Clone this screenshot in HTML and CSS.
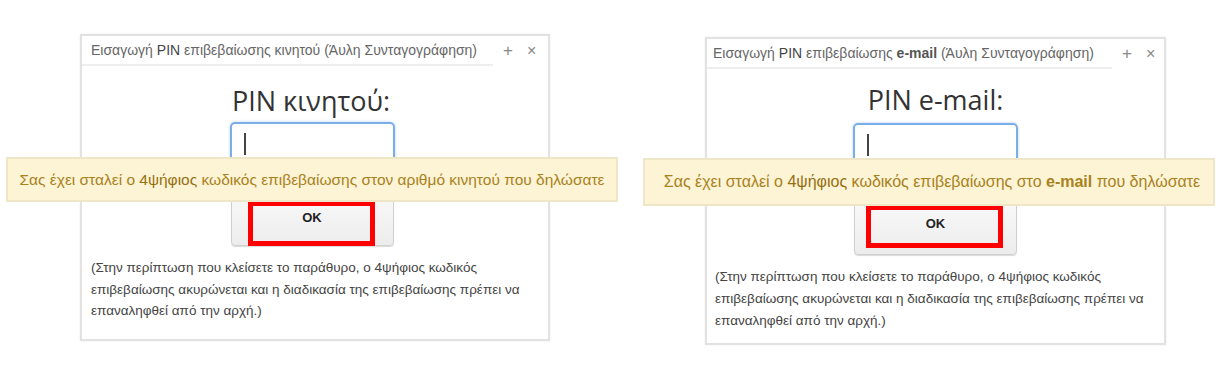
FILE: index.html
```html
<!DOCTYPE html>
<html lang="el">
<head>
    <meta charset="UTF-8">
    <meta name="viewport" content="width=device-width, initial-scale=1.0">
    <title>Εισαγωγή PIN επιβεβαίωσης</title>
    <link rel="stylesheet" href="styles.css">
</head>
<body>

    <div class="stage">

        <section class="shot shot-sms">
            <div class="dialog">
                <div class="dialog-head">
                    <span class="dialog-title">Εισαγωγή <b>PIN</b> επιβεβαίωσης κινητού (Άυλη Συνταγογράφηση)</span>
                    <span class="dialog-tools"><span>+</span><span class="close">&times;</span></span>
                </div>
                <div class="dialog-body">
                    <h2 class="pin-label">PIN κινητού:</h2>
                    <div class="pin-input"><span class="caret"></span></div>
                    <div class="ok-btn">OK<span class="mark"></span></div>
                    <p class="note">(Στην περίπτωση που κλείσετε το παράθυρο, ο 4ψήφιος κωδικός επιβεβαίωσης ακυρώνεται και η διαδικασία της επιβεβαίωσης πρέπει να επαναληφθεί από την αρχή.)</p>
                </div>
            </div>
            <div class="notice">Σας έχει σταλεί ο <b>4ψήφιος</b> κωδικός επιβεβαίωσης στον αριθμό κινητού που δηλώσατε</div>
        </section>

        <section class="shot shot-mail">
            <div class="dialog">
                <div class="dialog-head">
                    <span class="dialog-title">Εισαγωγή <b>PIN</b> επιβεβαίωσης <b class="strong">e-mail</b> (Άυλη Συνταγογράφηση)</span>
                    <span class="dialog-tools"><span>+</span><span class="close">&times;</span></span>
                </div>
                <div class="dialog-body">
                    <h2 class="pin-label">PIN e-mail:</h2>
                    <div class="pin-input"><span class="caret"></span></div>
                    <div class="ok-btn">OK<span class="mark"></span></div>
                    <p class="note">(Στην περίπτωση που κλείσετε το παράθυρο, ο 4ψήφιος κωδικός επιβεβαίωσης ακυρώνεται και η διαδικασία της επιβεβαίωσης πρέπει να επαναληφθεί από την αρχή.)</p>
                </div>
            </div>
            <div class="notice">Σας έχει σταλεί ο <b>4ψήφιος</b> κωδικός επιβεβαίωσης στο <b class="strong">e-mail</b> που δηλώσατε</div>
        </section>

    </div>

</body>
</html>
```

FILE: styles.css
```css
body { margin: 0; background: #fff; font-family: "Liberation Sans", Arial, sans-serif; }
.stage { display: flex; width: 1223px; height: 368px; overflow: hidden; }
.shot { position: relative; flex: none; }
.shot-sms { width: 620px; }
.shot-mail { width: 603px; }

/* dialog window */
.dialog { background: #fff; border: 2px solid #e2e2e2; box-shadow: 0 0 2px rgba(0, 0, 0, 0.08); }
.shot-sms .dialog { width: 466px; margin: 34px 0 0 80px; }
.shot-mail .dialog { width: 457px; margin: 37px 0 0 85px; }

.dialog-head { display: flex; align-items: center; }
.dialog-title { flex: none; height: 28px; line-height: 28px; border-bottom: 2px solid #eeeeee; font-size: 14px; color: #666; white-space: nowrap; }
.dialog-title b { font-weight: normal; color: #444; }
.dialog-title b.strong { font-weight: bold; color: #555; }
.shot-sms .dialog-title { width: 402px; padding-left: 9px; }
.shot-mail .dialog-title { width: 399px; padding-left: 6px; }
.dialog-tools { display: flex; gap: 14px; margin-left: 10px; color: #888; font-size: 17px; line-height: 28px; }
.dialog-tools .close { font-size: 16px; }

.dialog-body { display: flex; flex-direction: column; align-items: center; }
.pin-label { margin: 0; font-family: "Open Sans", sans-serif; font-weight: normal; font-size: 27px; line-height: 34px; color: #333; }
.shot-sms .pin-label { margin-top: 18px; margin-right: 8px; }
.shot-mail .pin-label { margin-top: 14px; }

.pin-input { box-sizing: border-box; width: 165px; height: 44px; margin-top: 6px; padding: 9px 0 0 12px; border: 2px solid #7aaee8; border-radius: 5px; box-shadow: 0 0 3px rgba(82, 150, 230, 0.45); }
.shot-sms .pin-input { margin-top: 4px; margin-right: 6px; }
.caret { display: block; width: 2px; height: 22px; background: #444; }

.ok-btn { position: relative; box-sizing: border-box; width: 163px; padding-top: 19px; border: 1px solid #d0d0d0; border-radius: 4px; background: linear-gradient(#fafafa, #ececec); box-shadow: 0 1px 1px rgba(0, 0, 0, 0.15); text-align: center; font-size: 13px; font-weight: bold; color: #222; }
.shot-sms .ok-btn { height: 56px; margin: 24px 6px 0 0; }
.shot-mail .ok-btn { height: 60px; margin-top: 28px; padding-top: 20px; }
.mark { position: absolute; border: 5px solid #f00; box-sizing: border-box; }
.shot-sms .mark { left: 16px; top: 10px; width: 127px; height: 45px; }
.shot-mail .mark { left: 11px; top: 9px; width: 137px; height: 43px; }

.note { align-self: stretch; margin: 0; font-size: 13.5px; color: #444; }
.shot-sms .note { margin-top: 11px; padding: 0 14px 17px 9px; line-height: 21.5px; }
.shot-mail .note { margin-top: 11px; padding: 0 10px 11px 8px; line-height: 22px; }

/* yellow notice laid over the dialog */
.notice { position: absolute; box-sizing: border-box; background: #fdf3d5; border: 2px solid #efe6c8; color: #a8821c; font-size: 15.5px; text-align: center; white-space: nowrap; }
.notice b { font-weight: normal; color: #94700f; }
.notice b.strong { font-weight: bold; color: #a8821c; }
.shot-sms .notice { left: 6px; top: 157px; width: 612px; height: 45px; line-height: 41px; }
.shot-mail .notice { left: 23px; top: 158px; width: 572px; height: 48px; line-height: 44px; font-size: 16px; padding-left: 6px; }
```
